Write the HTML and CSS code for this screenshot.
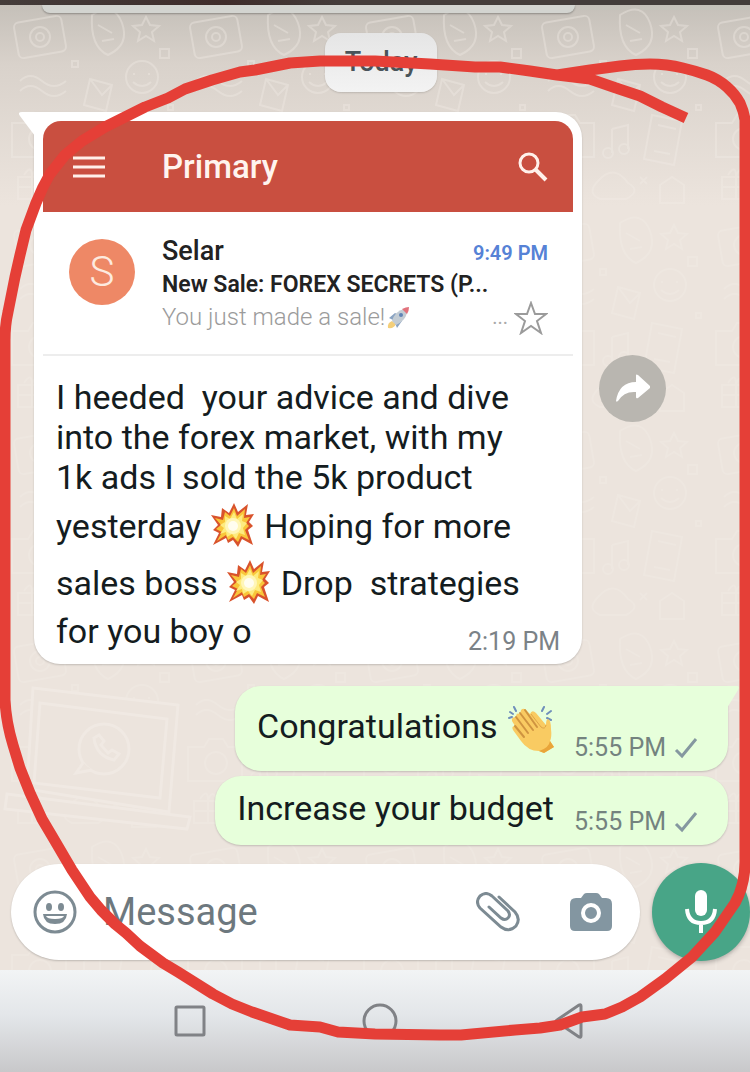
FILE: index.html
```html
<!DOCTYPE html>
<html lang="en">
<head>
    <meta charset="UTF-8">
    <meta name="viewport" content="width=device-width, initial-scale=1.0">
    <title>Chat</title>
    <link rel="stylesheet" href="styles.css">
</head>
<body>

    <!-- shared drawings -->
    <svg class="defs" aria-hidden="true">
        <symbol id="boom" viewBox="0 0 44 44">
            <path fill="#d9532c" d="M23 0 27 9 37 1 35 12 43 11 38 19 42 23 37 27 42 42 31 36 27 44 22 37 17 40 15 35 2 42 8 30 2 27 7 22 0 12 10 14 11 5 18 10Z"/>
            <path fill="#f9c63a" d="M23 5 26 13 34 6 33 15 39 14 35 20 38 23 34 27 38 37 30 33 27 39 22 34 17 37 15 32 6 38 11 29 5 26 10 22 4 15 12 17 14 9 19 13Z"/>
            <path fill="#fdec80" d="M23 9 26 16 32 11 31 18 36 20 32 25 34 32 28 30 25 36 21 31 16 34 15 29 9 31 13 25 9 22 14 19 14 13 19 16Z"/>
            <circle cx="22" cy="23" r="8" fill="#fff6b8"/>
            <circle cx="22" cy="23" r="5" fill="#fffdf0"/>
        </symbol>
        <symbol id="tick" viewBox="0 0 24 22">
            <path d="M2 13 8 19 22 2" fill="none" stroke="#8598a0" stroke-width="3"/>
        </symbol>
    </svg>

    <div class="topbar"></div>

    <main class="chat">
        <svg class="wallpaper" aria-hidden="true">
            <defs>
                <pattern id="doodles" width="176" height="208" patternUnits="userSpaceOnUse">
                    <g fill="none" stroke="#f3ede7" stroke-width="2">
                        <rect x="16" y="14" width="48" height="36" rx="5" transform="rotate(-10 40 32)"/>
                        <circle cx="40" cy="32" r="10"/>
                        <circle cx="40" cy="32" r="4"/>
                        <path d="M92 10q22-14 30 8t-14 32q-18-8-16-40zM98 20l14 8M102 36l12-2"/>
                        <path d="M146 12l4 8 9 1-7 6 2 9-8-5-8 5 2-9-7-6 9-1z"/>
                        <path d="M20 76q10-10 22 0t24 0M20 86q10-10 22 0t24 0"/>
                        <circle cx="142" cy="72" r="16"/>
                        <path d="M134 68v2M149 68v2M133 77q9 8 18 0"/>
                        <path d="M90 74l22 6-6 26-22-6zM90 74l12 16 10-10"/>
                        <path d="M12 118h16l5-8h14l5 8h14v34H12z"/>
                        <circle cx="40" cy="134" r="11"/>
                        <path d="M124 110l30 6-8 44-30-6zM130 120l18 4M126 146l16 3"/>
                        <path d="M84 124v24M84 124l16-4v24"/>
                        <circle cx="80" cy="148" r="5"/>
                        <circle cx="96" cy="144" r="5"/>
                        <path d="M18 172h28v22H18zM18 182h28M32 172v22M24 170q8-12 8 2 4-14 10 0"/>
                        <path d="M70 176q16-18 30 2 14 8-2 16H72q-14-6-2-18z"/>
                        <path d="M132 180l12-8 12 8v18h-24zM160 44h9v9h-9zM72 56h6v6h-6zM112 172l7 7M119 172l-7 7M168 100h5v5h-5z"/>
                    </g>
                </pattern>
            </defs>
            <rect class="doodles" width="100%" height="100%" fill="url(#doodles)"/>
            <g fill="#ece4dd" stroke="#f3ede7" stroke-width="3">
                <path d="M33 683 178 700 169 807 27 784Z"/>
                <path d="M40 698 167 714 160 793 34 778Z"/>
                <path d="M7 789 190 812 187 824 5 804Z"/>
                <circle cx="104" cy="744" r="25"/>
                <path d="M83 758 76 768 92 765M94 733q2 18 20 22l5-6-7-4-4 3-7-8 3-4-5-6z"/>
            </g>
        </svg>

        <div class="bubble-prev"></div>
        <div class="day">Today</div>

        <div class="row row-in">
            <div class="bubble bubble-in">
                <svg class="tail tail-in" viewBox="0 0 16 24" aria-hidden="true"><path d="M16 0H3Q-2 0 1 4L16 24Z" fill="#fff"/></svg>

                <div class="mail">
                    <div class="mail-header">
                        <svg class="icon-menu" viewBox="0 0 32 22" aria-hidden="true"><path d="M0 2H32M0 11H32M0 20H32" stroke="#fff0ea" stroke-width="3"/></svg>
                        <span class="mail-title">Primary</span>
                        <svg class="icon-search" viewBox="0 0 30 30" fill="none" stroke="#fff0ea" aria-hidden="true"><circle cx="11" cy="11" r="9" stroke-width="3"/><path d="M17 17 28 28" stroke-width="4"/></svg>
                    </div>
                    <div class="mail-item">
                        <div class="avatar">S</div>
                        <div class="mail-text">
                            <div class="mail-line"><span class="sender">Selar</span><span class="mail-time">9:49 PM</span></div>
                            <div class="subject">New Sale: FOREX SECRETS (P...</div>
                            <div class="mail-line">
                                <span class="snippet">You just made a sale!</span>
                                <svg class="rocket" viewBox="0 0 24 24" role="img" aria-label="rocket">
                                    <path d="M2 22Q1 17 6 15L10 18Q8 23 2 22Z" fill="#f4cf7a"/>
                                    <path d="M3 12 9 7 13 9 7 14ZM11 22 16 15 14 11 9 17Z" fill="#8aa3c2"/>
                                    <path d="M6 15Q9 5 18 3L21 7Q19 15 10 19Z" fill="#c3ccd4"/>
                                    <path d="M16 3Q20 1 23 1 23 5 21 8Z" fill="#e2727c"/>
                                    <circle cx="15" cy="9" r="2" fill="#5f83b5"/>
                                </svg>
                                <span class="more">...</span>
                                <svg class="star" viewBox="0 0 34 34" aria-hidden="true"><path d="M17 2 21 13 32 13 23 20 27 32 17 25 7 32 11 20 2 13 13 13Z" fill="none" stroke="#9b9b9b" stroke-width="2"/></svg>
                            </div>
                        </div>
                    </div>
                </div>

                <p class="text">I heeded&nbsp; your advice and dive<br>
                    into the forex market, with my<br>
                    1k ads I sold the 5k product<br>
                    yesterday <svg class="boom" role="img" aria-label="collision"><use href="#boom"/></svg> Hoping for more<br>
                    sales boss <svg class="boom" role="img" aria-label="collision"><use href="#boom"/></svg> Drop&nbsp; strategies<br>
                    for you boy o</p>
                <span class="time time-in">2:19 PM</span>
            </div>

            <button class="forward" aria-label="Forward">
                <svg viewBox="0 0 34 28"><path d="M0 27Q3 8 20 8V1Q20 0 22 1L34 12Q35 13 34 14L22 24Q20 25 20 23V18Q8 17 2 27Q0 28 0 27Z" fill="#fff"/></svg>
            </button>
        </div>

        <div class="row row-out">
            <div class="bubble bubble-out first">
                <svg class="tail tail-out" viewBox="0 0 12 22" aria-hidden="true"><path d="M0 0H10Q13 0 11 4L0 22Z" fill="#e7ffdb"/></svg>
                <p class="text">Congratulations
                    <svg class="clap" viewBox="0 0 46 48" role="img" aria-label="clapping hands">
                        <path d="M2 7 5 9M6 2 8 6M1 13 4 12M34 6 36 2M39 9 43 6M39 13 43 15" stroke="#6f8fbb" stroke-width="2" stroke-linecap="round"/>
                        <path d="M13 5Q16 2 19 6L22 9Q24 4 28 8L38 20Q38 14 40 14 43 15 43 24 44 32 42 36L46 42 36 48 31 46Q20 46 13 36L5 25Q3 21 7 21L4 16Q3 12 8 12 8 7 12 9Z" fill="#f9cb62"/>
                        <path d="M8 12 20 28M12 8 25 25M17 5 29 22M7 21 16 32" fill="none" stroke="#cf9440" stroke-width="2" stroke-linecap="round"/>
                        <path d="M23 9 33 22Q37 25 38 20" fill="none" stroke="#dfa548" stroke-width="1"/>
                        <path d="M31 46Q41 43 42 36L46 42 36 48Z" fill="#e9a53a"/>
                    </svg></p>
                <span class="time">5:55 PM <svg class="tick" role="img" aria-label="sent"><use href="#tick"/></svg></span>
            </div>
        </div>
        <div class="row row-out">
            <div class="bubble bubble-out">
                <p class="text">Increase your budget</p>
                <span class="time">5:55 PM <svg class="tick" role="img" aria-label="sent"><use href="#tick"/></svg></span>
            </div>
        </div>

        <form class="composer">
            <div class="field">
                <button type="button" aria-label="Emoji">
                    <svg width="44" height="44" viewBox="0 0 44 44"><circle cx="22" cy="22" r="20" fill="none" stroke="#7d8b93" stroke-width="3"/><ellipse cx="16" cy="17" rx="3" ry="4" fill="#7d8b93"/><ellipse cx="28" cy="17" rx="3" ry="4" fill="#7d8b93"/><path d="M10 24H34Q33 34 22 34T10 24Z" fill="#7d8b93"/><path d="M13 26H31Q30 29 22 29T13 26Z" fill="#fff"/></svg>
                </button>
                <input type="text" placeholder="Message" aria-label="Message">
                <button type="button" aria-label="Attach">
                    <svg width="44" height="40" viewBox="0 0 44 40" fill="none" stroke="#7d8b93" stroke-width="3" stroke-linecap="round"><path d="M23 5 39 20Q45 27 40 34 33 41 25 35L4 16Q-1 10 4 4 10 -1 16 4L32 19Q35 23 32 26 29 29 25 26L13 15"/></svg>
                </button>
                <button type="button" class="camera" aria-label="Camera">
                    <svg width="42" height="40" viewBox="0 0 42 40"><path d="M6 6H11L14 2Q15 1 17 1H26Q28 1 29 2L32 6H36Q42 6 42 12V34Q42 39 37 39H5Q0 39 0 34V12Q0 6 6 6Z" fill="#8396a1"/><circle cx="21" cy="21" r="8" fill="none" stroke="#fff" stroke-width="4"/></svg>
                </button>
            </div>
            <button type="button" class="mic" aria-label="Record voice message">
                <svg width="32" height="44" viewBox="0 0 32 44"><rect x="10" y="0" width="12" height="26" rx="6" fill="#fff"/><path d="M2 19Q3 33 16 33T30 19M16 33V43" fill="none" stroke="#fff" stroke-width="4"/></svg>
            </button>
        </form>
    </main>

    <nav class="navbar">
        <button aria-label="Recent apps"><svg width="36" height="36" viewBox="0 0 36 36"><rect x="4" y="4" width="28" height="28" rx="1"/></svg></button>
        <button aria-label="Home"><svg width="36" height="36" viewBox="0 0 36 36"><circle cx="18" cy="18" r="16"/></svg></button>
        <button aria-label="Back"><svg width="36" height="36" viewBox="0 0 36 36"><path d="M29 3V33Q29 35 27 34L5 19Q3 18 5 17L27 2Q29 1 29 3Z"/></svg></button>
    </nav>

    <!-- red marker line -->
    <svg class="marker" viewBox="0 0 750 1072" preserveAspectRatio="none" aria-hidden="true">
        <path d="M686 118 662 107 640 96 616 88 590 79 557 75 530 71 500 67 475 67 430 64 375 61 320 61 290 63 270 67 255 70 240 72 212 80 185 89 168 98 145 107 125 117 105 127 82 141 65 155 50 174 43 187 36 203 26 230 20 255 15 277 8 312Q5 325 5 340V700Q6 722 13 745L20 768 30 793 42 819 55 841 72 870 90 897 101 910 115 924 126 933 140 946 163 963 178 972 213 994 232 1004 252 1012 290 1025 320 1027 338 1032 375 1034 440 1035 461 1035 515 1030 540 1028 560 1025 582 1017 605 1014 622 1007 640 997 665 979 692 957 715 932 735 903Q745 885 745 862V120Q744 112 740 103 735 94 727 87 718 79 707 75 696 71 683 68 667 64 650 64 635 64 620 66L590 70 557 75"/>
    </svg>

</body>
</html>
```
FILE: styles.css
```css
* {
    box-sizing: border-box;
}
body {
    margin: 0;
    min-height: 100vh;
    display: flex;
    flex-direction: column;
    position: relative;
    overflow-x: hidden;
    background-color: #ece4dd;
    color: #141c20;
    font-family: Roboto, Arial, sans-serif;
}
button {
    padding: 0;
    border: 0;
    background: none;
}
button svg {
    display: block;
}
.defs {
    position: absolute;
    width: 0;
    height: 0;
}
.topbar {
    height: 5px;
    background: linear-gradient(90deg, #443c3a, #3f2c2a 30%, #443c3a 45%);
}

/* Chat */
.chat {
    flex: 1;
    display: flex;
    flex-direction: column;
    position: relative;
    isolation: isolate;
    background: linear-gradient(#c5c0b9, #d9d2cb 60px, #ece4dd 200px);
}
.wallpaper {
    position: absolute;
    inset: 0;
    z-index: -1;
    width: 100%;
    height: 100%;
    opacity: 0.6;
}
.doodles {
    opacity: 0.6;
}
.bubble-prev {
    width: 71%;
    height: 8px;
    margin-left: 42px;
    border-radius: 0 0 20px 20px;
    background-color: #d3d4d0;
    box-shadow: 0 1px 2px rgba(0, 0, 0, 0.3);
}
.day {
    align-self: center;
    margin: 20px 0 20px 12px;
    padding: 0 20px;
    border-radius: 16px;
    background: linear-gradient(#e5e5e5, #f3f3f3);
    box-shadow: 0 1px 2px rgba(0, 0, 0, 0.15);
    color: #49545a;
    font-size: 27px;
    font-weight: 500;
    line-height: 59px;
}
.row {
    display: flex;
    align-items: center;
}
.row-in {
    gap: 17px;
    margin-bottom: 22px;
    padding-left: 34px;
}
.row-out {
    justify-content: flex-end;
    margin-bottom: 5px;
    padding-right: 22px;
}
.bubble {
    position: relative;
    border-radius: 26px;
    box-shadow: 0 1px 2px rgba(0, 0, 0, 0.18);
}
.bubble-in {
    width: 548px;
    padding: 9px 9px 7px;
    border-top-left-radius: 0;
    background-color: #fff;
}
.bubble-out {
    display: flex;
    align-items: flex-end;
    gap: 20px;
    padding: 12px 30px 8px 22px;
    background-color: #e7ffdb;
}
.bubble-out.first {
    border-top-right-radius: 0;
}
.tail {
    position: absolute;
    top: 0;
}
.tail-in {
    left: -15px;
    width: 16px;
    height: 24px;
}
.tail-out {
    right: -11px;
    width: 12px;
    height: 22px;
}
.text {
    margin: 0;
    font-size: 34px;
    line-height: 40px;
}
.bubble-in .text {
    padding: 21px 13px 0;
}
.bubble-out .text {
    padding-bottom: 9px;
}
.bubble-out.first .text {
    padding: 3px 0 6px;
}
.boom {
    width: 44px;
    height: 44px;
    margin: 6px 1px 7px;
    vertical-align: -16px;
}
.clap {
    width: 46px;
    height: 48px;
    margin: 4px 0 4px 2px;
    vertical-align: middle;
}
.time {
    display: flex;
    align-items: center;
    gap: 8px;
    color: #74837f;
    font-size: 25px;
    line-height: 30px;
}
.time-in {
    justify-content: flex-end;
    margin-top: -24px;
    padding-right: 13px;
    color: #7b8287;
}
.tick {
    width: 24px;
    height: 22px;
}

/* Mail card */
.mail {
    border-radius: 18px 18px 0 0;
    border-bottom: 2px solid #ededed;
    overflow: hidden;
}
.mail-header {
    display: flex;
    align-items: center;
    height: 91px;
    padding: 0 25px 0 30px;
    background-color: #c94f40;
    color: #fff4ef;
}
.icon-menu {
    width: 32px;
    height: 22px;
}
.mail-title {
    flex: 1;
    margin-left: 57px;
    font-size: 33px;
    font-weight: 500;
}
.icon-search {
    width: 30px;
    height: 30px;
}
.mail-item {
    display: flex;
    gap: 27px;
    padding: 23px 25px 20px 26px;
}
.avatar {
    width: 66px;
    height: 66px;
    margin-top: 4px;
    border-radius: 50%;
    background-color: #ee8866;
    color: #fdeadf;
    font-size: 42px;
    font-weight: 300;
    line-height: 66px;
    text-align: center;
}
.mail-text {
    flex: 1;
    color: #222;
    font-size: 24px;
    line-height: 33px;
}
.mail-line {
    display: flex;
    align-items: center;
    height: 33px;
}
.sender {
    flex: 1;
    font-size: 27px;
    font-weight: 500;
}
.mail-time {
    padding-top: 4px;
    color: #5682d6;
    font-size: 20px;
    font-weight: 600;
}
.subject {
    font-size: 23px;
    font-weight: 600;
    white-space: nowrap;
}
.snippet {
    color: #9b9b9b;
    font-weight: 300;
}
.rocket {
    width: 24px;
    height: 24px;
    margin-left: 1px;
}
.more {
    margin-left: auto;
    color: #aaa;
    font-size: 20px;
}
.star {
    width: 34px;
    height: 34px;
    margin-left: 6px;
}
.forward {
    display: grid;
    place-items: center;
    width: 67px;
    height: 67px;
    border-radius: 50%;
    background-color: #b9b6b0;
}
.forward svg {
    width: 34px;
    height: 28px;
}

/* Composer */
.composer {
    display: flex;
    align-items: center;
    gap: 12px;
    margin-top: auto;
    padding: 0 0 9px 11px;
}
.field {
    flex: 1;
    display: flex;
    align-items: center;
    min-width: 0;
    height: 96px;
    padding: 0 28px 0 22px;
    border-radius: 48px;
    background-color: #fff;
    box-shadow: 0 1px 2px rgba(0, 0, 0, 0.2);
}
.field input {
    flex: 1;
    min-width: 0;
    margin-left: 26px;
    padding: 0;
    border: 0;
    outline: 0;
    background: none;
    color: #141c20;
    font-family: inherit;
    font-size: 38px;
}
.field input::placeholder {
    color: #6d787e;
    opacity: 1;
}
.camera {
    margin-left: 50px;
}
.mic {
    display: grid;
    place-items: center;
    width: 98px;
    height: 98px;
    border-radius: 50%;
    background-color: #48a587;
    box-shadow: 0 2px 4px rgba(0, 0, 0, 0.25);
}

/* Android buttons */
.navbar {
    display: flex;
    align-items: center;
    height: 102px;
    padding: 0 85px 0 95px;
    background: linear-gradient(#f2f4f5, #e3e6e9 45%, #c8c8ca);
}
.navbar button {
    flex: 1;
    display: grid;
    place-items: center;
}
.navbar svg {
    fill: none;
    stroke: #808286;
    stroke-width: 3px;
}

.marker {
    position: absolute;
    inset: 0;
    width: 100%;
    height: 100%;
    pointer-events: none;
}
.marker path {
    fill: none;
    stroke: #e53f37;
    stroke-width: 11px;
    stroke-linejoin: round;
}
```
